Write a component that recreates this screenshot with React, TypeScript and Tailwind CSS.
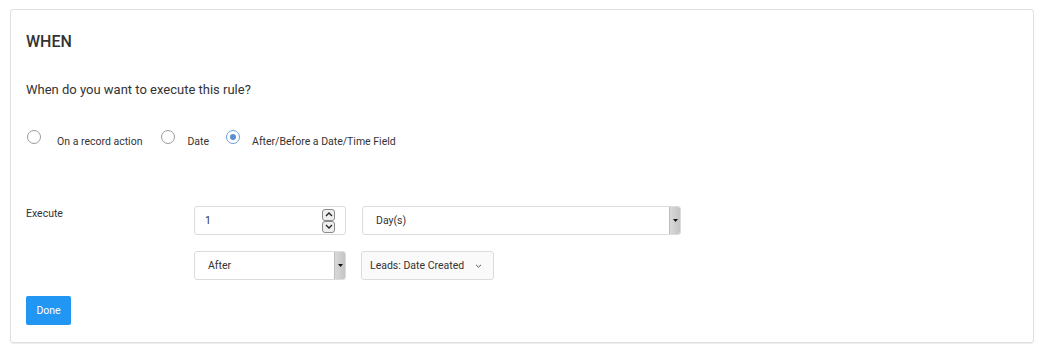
import React from 'react';

const Radio: React.FC<{ label: string; checked?: boolean; first?: boolean }> = ({ label, checked, first }) => {
  return (
    <label className="flex items-start mr-[17px]">
      <span
        className={
          'mt-[2px] w-[14px] h-[14px] rounded-full border flex items-center justify-center bg-white ' +
          (checked ? 'border-[#6f9fd6]' : 'border-[#9a9a9a]')
        }
      >
        {checked && <span className="w-[6px] h-[6px] rounded-full bg-[#5a8fd0]"></span>}
      </span>
      <span
        className={
          (first ? 'ml-[16px] mr-[2px]' : 'ml-[12px]') + ' mt-[7px] text-[10.5px] leading-[13px] text-[#333]'
        }
      >
        {label}
      </span>
    </label>
  );
};

const Chevron: React.FC<{ up?: boolean }> = ({ up }) => (
  <svg width="8" height="5" viewBox="0 0 8 5" className="block">
    <path
      d={up ? 'M1 4 L4 1 L7 4' : 'M1 1 L4 4 L7 1'}
      fill="none"
      stroke="#222"
      strokeWidth="1.3"
    />
  </svg>
);

const NativeArrow: React.FC = () => (
  <div className="w-[11px] self-stretch bg-gradient-to-r from-[#d9d9d9] to-[#c4c4c4] border-l border-[#bdbdbd] flex items-center justify-center">
    <svg width="5" height="3" viewBox="0 0 5 3" className="block">
      <path d="M0 0 H5 L2.5 3 Z" fill="#111" />
    </svg>
  </div>
);

const App: React.FC = () => {
  return (
    <div className="w-[1044px] h-[352px] bg-white pt-[9px] pl-[10px]" style={{ fontFamily: 'Roboto, "Liberation Sans", sans-serif' }}>
      <div className="w-[1024px] h-[334px] border border-[#e0e0e0] rounded-[3px] shadow-[0_1px_1px_rgba(0,0,0,0.08)] pt-[22px] px-[15px]">
        <h2 className="text-[16px] leading-[19px] font-medium text-[#333]">WHEN</h2>

        <p className="mt-[31px] text-[13px] leading-[16px] text-[#333]">When do you want to execute this rule?</p>

        <div className="mt-[30px] flex items-start h-[20px] pl-[1px]">
          <Radio label="On a record action" first />
          <Radio label="Date" />
          <Radio label="After/Before a Date/Time Field" checked />
        </div>

        <div className="mt-[58px] flex">
          <div className="w-[168px] text-[10.5px] leading-[13px] text-[#333] pt-[1px]">Execute</div>
          <div className="flex flex-col gap-[16px]">
            <div className="flex gap-[16px]">
              <div className="w-[152px] h-[29px] border border-[#dcdcdc] rounded-[3px] bg-white flex items-center pl-[10px] pr-[10px]">
                <span className="flex-1 text-[10.5px] text-[#333]">1</span>
                <div className="flex flex-col">
                  <span className="w-[13px] h-[12px] border border-[#8a8a8a] rounded-[3px] bg-[#eee] flex items-center justify-center">
                    <Chevron up />
                  </span>
                  <span className="w-[13px] h-[12px] border border-[#8a8a8a] rounded-[3px] bg-[#eee] flex items-center justify-center">
                    <Chevron />
                  </span>
                </div>
              </div>
              <div className="w-[319px] h-[29px] border border-[#dcdcdc] rounded-[3px] bg-white flex items-center overflow-hidden">
                <span className="flex-1 pl-[13px] text-[10.5px] text-[#333]">Day(s)</span>
                <NativeArrow />
              </div>
            </div>
            <div className="flex gap-[15px]">
              <div className="w-[152px] h-[29px] border border-[#dcdcdc] rounded-[3px] bg-white flex items-center overflow-hidden">
                <span className="flex-1 pl-[13px] text-[10.5px] text-[#333]">After</span>
                <NativeArrow />
              </div>
              <div className="w-[133px] h-[29px] border border-[#dcdcdc] rounded-[3px] bg-[#fafafa] flex items-center pl-[8px] pr-[11px]">
                <span className="flex-1 text-[10.5px] text-[#333]">Leads: Date Created</span>
                <svg width="7" height="4" viewBox="0 0 7 4" className="block">
                  <path d="M1 0.8 L3.5 3.2 L6 0.8" fill="none" stroke="#555" strokeWidth="1" />
                </svg>
              </div>
            </div>
          </div>
        </div>

        <button className="mt-[16px] w-[45px] h-[29px] rounded-[2px] bg-[#2196f3] text-white text-[10.5px] leading-[13px]">
          Done
        </button>
      </div>
    </div>
  );
};

export default App;
